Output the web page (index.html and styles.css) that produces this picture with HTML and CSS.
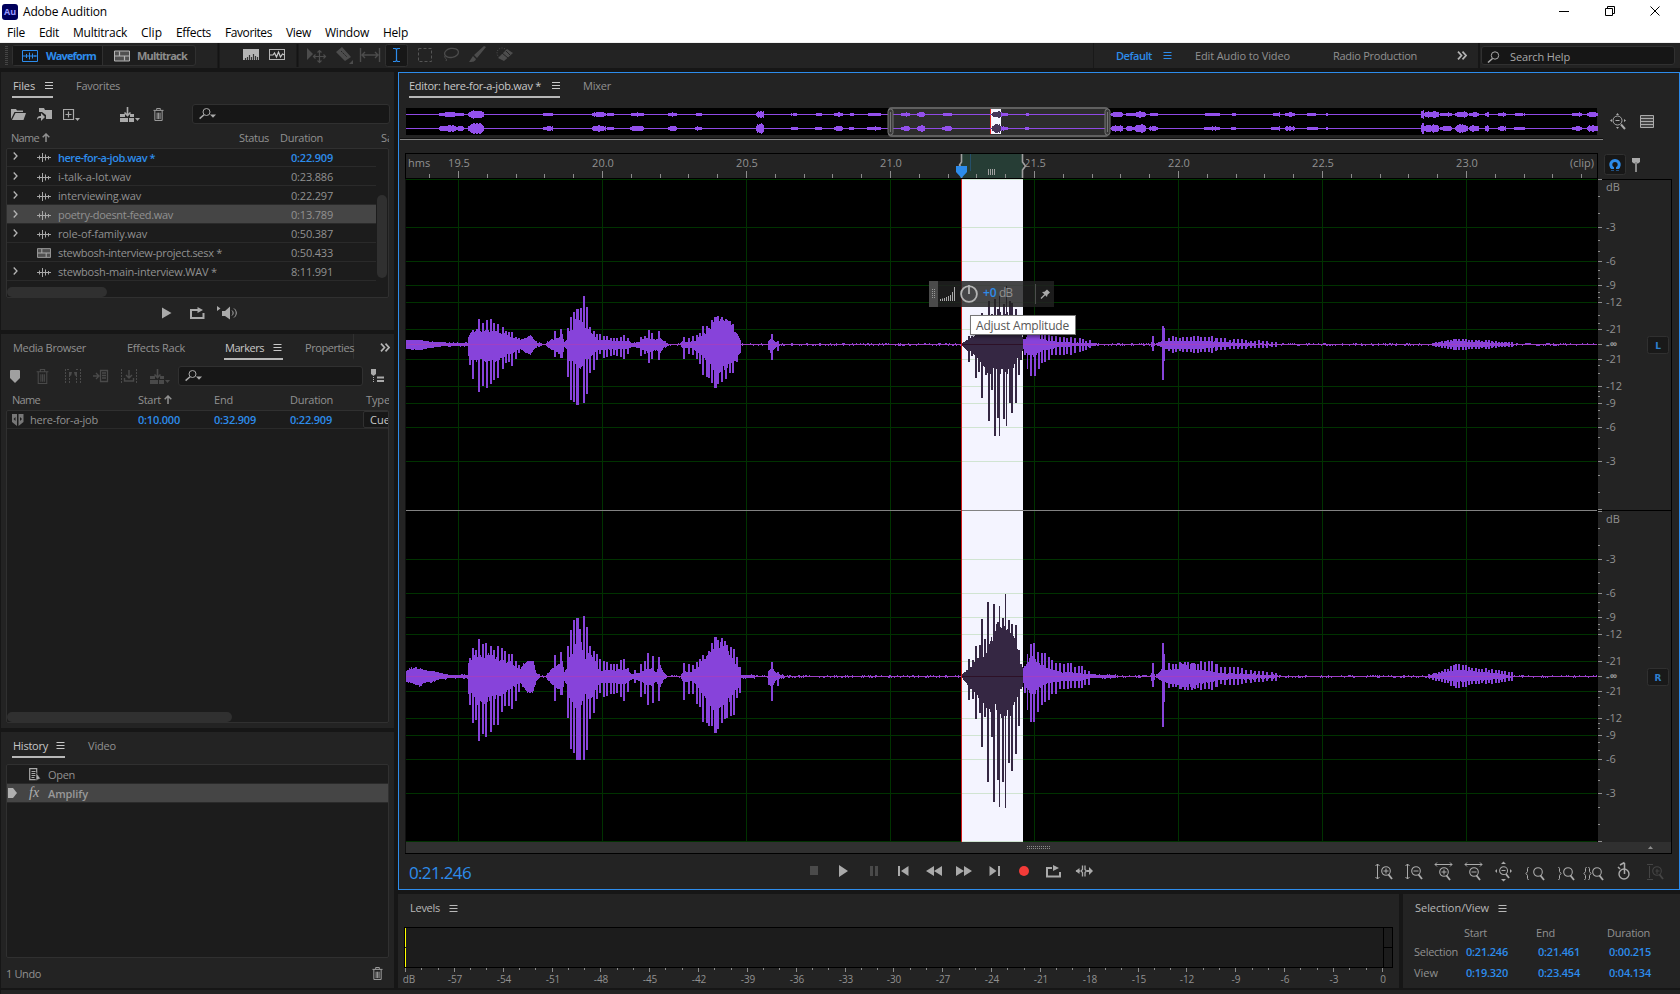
FILE: index.html
```html
<!DOCTYPE html>
<html lang="en">
<head>
<meta charset="utf-8">
<title>Adobe Audition</title>
<link rel="stylesheet" href="styles.css">
</head>
<body>
<svg class="defs" width="0" height="0">
  <symbol id="menu" viewBox="0 0 8 9"><path d="M0 1.5h8M0 4.5h8M0 7.5h8" stroke="currentColor" fill="none"/></symbol>
  <symbol id="trash" viewBox="0 0 12 14"><path d="M.5 2.5h11M4 2V.5h4V2M2 3v10.5h8V3M4.5 5v7M6.1 5v7M7.7 5v7" stroke="currentColor" fill="none"/></symbol>
  <symbol id="find" viewBox="0 0 18 12"><circle cx="7.5" cy="4" r="3.5" fill="none" stroke="currentColor"/><path d="M5 6.8L.6 10.6" stroke="currentColor" stroke-width="1.5"/><path d="M11 6.5h6l-3 3.2z" fill="currentColor"/></symbol>
  <symbol id="wave" viewBox="0 0 14 11"><path d="M0 5.5h14M2.5 3.5v4M5.5 1v9M8.500 2.500v6M11.5 4v3.500" stroke="currentColor" fill="none"/></symbol>
  <symbol id="multi" viewBox="0 0 16 11"><path d="M.5 .5h15v10H.5z" fill="#505050" stroke="currentColor"/><path d="M1 5.500h14M5.500 1v4M10.500 6v4" stroke="currentColor" stroke-width="1.200"/></symbol>
  <symbol id="insert" viewBox="0 0 20 15"><path d="M0 7h5v3H0zM10 7h4v3h-4zM0 11h8v4H0zM9 11h5v4H9z" fill="currentColor"/><path d="M7.500 0v8M4.500 5.500l3 3 3-3" stroke="currentColor" stroke-width="1.600" fill="none"/><path d="M15 11h5l-2.500 3z" fill="currentColor"/></symbol>
  <symbol id="play" viewBox="0 0 10 12"><path d="M0 .5v11L9.500 6z" fill="currentColor"/></symbol>
  <symbol id="loop" viewBox="0 0 15 12"><path d="M6 3H1v8h12.500V6M6 3h3" stroke="currentColor" stroke-width="2" fill="none"/><path d="M7.500 0v6L13 3z" fill="currentColor"/></symbol>
  <symbol id="lens" viewBox="0 0 12 14"><circle cx="5" cy="5" r="4.300" fill="none" stroke="currentColor" stroke-width="1.100"/><path d="M7.500 8.500l3.500 4.500" stroke="currentColor" stroke-width="1.900"/></symbol>
  <symbol id="arrowup" viewBox="0 0 8 9"><path d="M4 9V1M.7 4.200L4 1l3.300 3.200" stroke="currentColor" stroke-width="1.500" fill="none"/></symbol>
  <symbol id="more" viewBox="0 0 10 9"><path d="M1 .7l3.500 3.800L1 8.300M5.500 .7L9 4.500 5.500 8.300" stroke="currentColor" stroke-width="1.700" fill="none"/></symbol>
</svg>
<div class="app">
  <header class="titlebar">
    <svg class="logo" width="16" height="16"><rect width="16" height="16" rx="3" fill="#00005b"/><text x="8" y="11.300" text-anchor="middle" class="logo-text">Au</text></svg>
    <span data-w="84">Adobe Audition</span>
    <svg class="winctl" width="110" height="20" viewBox="1555 0 110 20"><path d="M1559 9.500h10M1605.500 6.500h7v7h-7zM1607.500 6.500v-2h7v7h-2M1650.500 4.500l9 9M1659.500 4.500l-9 9" fill="none" stroke="#000"/></svg>
  </header>
  <nav class="menubar">
    <span data-w="18">File</span><span data-w="20">Edit</span><span data-w="54">Multitrack</span><span data-w="21">Clip</span><span data-w="35">Effects</span><span data-w="47">Favorites</span><span data-w="25">View</span><span data-w="44">Window</span><span data-w="25">Help</span>
  </nav>
  <div class="toolbar">
    <svg class="grip" width="3" height="19"><path d="M1.500 0v19" stroke="#444" stroke-width="3" stroke-dasharray="1 1"/></svg>
    <div class="modes">
      <div class="mode active"><svg width="16" height="12" viewBox="0 0 16 12"><path d="M.5 .5h15v11H.5zM1 6h14M4.500 4v4M7.500 2.500v7M10.500 3.500v5M13 5v2" fill="none" stroke="currentColor"/></svg><b data-w="50">Waveform</b></div>
      <div class="mode"><svg class="lite" width="16" height="12"><use href="#multi"/></svg><b data-w="50">Multitrack</b></div>
    </div>
    <svg class="tools" width="300" height="25" viewBox="215 43 300 25">
      <path d="M218.500 43v25M297.500 44v23" stroke="#141414" stroke-width="2"/>
      <rect x="243" y="49" width="16" height="11" fill="#b4b4b4"/><path d="M245.500 60v-2M247.500 60v-3M249.500 60v-5M251.500 60v-3M253.500 60v-6M255.500 60v-4M257.500 60v-3" fill="none" stroke="#333" stroke-width="1.200"/>
      <rect x="269.500" y="49.500" width="15" height="10" fill="none" stroke="#b4b4b4"/><path d="M270 55h3l1.500-2 2 4 2-5 2 5 2-3 2 1" fill="none" stroke="#c8c8c8" stroke-width="1.200"/>
      <g fill="#4c4c4c" stroke="none"><path d="M307 48v12l6-6z"/><path d="M336 52l6-5 9 10-6 4zM353 60v4h-4zM469 62l4-6 3 3c-1 3-4 3-7 3zM474 55l10-9 2 1-9 11z"/><path d="M498 58l9-9 6 4-9 8z"/></g>
      <path d="M319.500 51v11M314 56.500h11M317.500 52.500l2-2 2 2M317.500 60.500l2 2 2-2M315.500 54.500l-2 2 2 2M323.500 54.500l2 2-2 2" fill="none" stroke="#4c4c4c" stroke-width="1.200"/>
      <path d="M360.500 48v14M379.500 48v14M362 55h16M365 52l-3 3 3 3M375 52l3 3-3 3" fill="none" stroke="#4c4c4c" stroke-width="1.400"/>
      <rect x="385.500" y="44.500" width="22" height="22" rx="2" fill="#171717" stroke="#303030"/><path d="M393 48.500h2.500l1 1 1-1h2.500M396.500 49v12M393 61.500h2.500l1-1 1 1h2.500" fill="none" stroke="#2d8ceb" stroke-width="1.200"/>
      <rect x="418.500" y="48.500" width="13" height="13" fill="none" stroke="#555" stroke-dasharray="3 2"/>
      <ellipse cx="451.500" cy="53" rx="7" ry="4.500" fill="none" stroke="#4c4c4c" stroke-width="1.300" transform="rotate(-10 451 53)"/><path d="M445 56c-2 2 3 2 1 5" stroke="#4c4c4c" fill="none"/>
      <circle cx="502" cy="53" r="5" fill="none" stroke="#555" stroke-dasharray="1 1.500"/><path d="M502 53l6 5M506 51l4 4" stroke="#232323"/>
      <path d="M341 51l6 6" stroke="#232323" stroke-dasharray="2 1"/>
    </svg>
    <div class="spaces">
      <span class="blue strong" data-w="36">Default</span><svg class="blue" width="9" height="9"><use href="#menu"/></svg><span data-w="95">Edit Audio to Video</span><span data-w="84">Radio Production</span><svg class="lite" width="10" height="9"><use href="#more"/></svg>
    </div>
    <div class="help"><svg width="13" height="12" viewBox="0 0 13 12"><circle cx="8" cy="4.500" r="3.700" fill="none" stroke="#aaa"/><path d="M5.500 7.500L1 11.500" stroke="#aaa" stroke-width="1.500"/></svg><span data-w="60">Search Help</span></div>
  </div>

  <main class="workspace">
    <aside class="left">
      <section class="panel files">
        <div class="tabs"><div class="tab on"><span data-w="22">Files</span><svg width="8" height="9"><use href="#menu"/></svg></div><div class="tab t2"><span data-w="44">Favorites</span></div></div>
        <div class="tools-row files-tools">
          <svg width="16" height="12" viewBox="0 0 16 12"><path d="M0 11V1h5l1 1.500h6V4H3.500z" fill="#aaa"/><path d="M4.500 5H15l-2.500 7H1z" fill="#aaa"/></svg>
          <svg width="16" height="14" viewBox="0 0 16 14"><path d="M2 1h5l1 2h7v9H9V8L5 5H2z" fill="#aaa"/><path d="M0 13c0-3 1-4 4-4V6l4 4-4 4v-3c-2 0-3 0-4 2z" fill="#aaa"/></svg>
          <svg width="18" height="13" viewBox="0 0 18 13"><path d="M.5 1.500h10v10H.5zM5.500 3.500v6M2.500 6.500h6" fill="none" stroke="#aaa" stroke-width="1.200"/><path d="M12 10h5l-2.500 3z" fill="#aaa"/></svg>
          <svg width="20" height="15"><use href="#insert"/></svg>
          <svg width="11" height="13"><use href="#trash"/></svg>
          <div class="search"><svg width="18" height="12"><use href="#find"/></svg></div>
        </div>
        <div class="thead files-cols"><span class="arrowed"><i data-w="28">Name</i><svg width="8" height="9"><use href="#arrowup"/></svg></span><span data-w="30">Status</span><span data-w="43">Duration</span><span>Sa</span></div>
        <div class="tbody files-body" id="files"></div>
        <div class="preview">
          <svg width="10" height="12"><use href="#play"/></svg><svg width="15" height="12"><use href="#loop"/></svg>
          <svg width="21" height="14" viewBox="0 0 21 14"><path d="M0 0v5l3.500-2.500z" fill="#aaa"/><path d="M5 5h3l5-4.500v13L8 10H5z" fill="#aaa"/><path d="M15 4.500c1.500 1.500 1.500 3.500 0 5M17 2.500c3 2.500 3 6.500 0 9" fill="none" stroke="#aaa"/></svg>
        </div>
      </section>

      <section class="panel markers">
        <div class="tabs mk-tabs"><div class="tab"><span data-w="73">Media Browser</span></div><div class="tab"><span data-w="58">Effects Rack</span></div><div class="tab on"><span data-w="39">Markers</span><svg width="9" height="9"><use href="#menu"/></svg></div><div class="tab"><span data-w="49">Properties</span></div><svg class="lite" width="10" height="9"><use href="#more"/></svg></div>
        <div class="tools-row mk-tools">
          <svg width="10" height="13"><path d="M0 1q0-1 1-1h8q1 0 1 1v7l-5 5-5-5z" fill="#a0a0a0"/></svg>
          <svg class="dim" width="13" height="15"><use href="#trash"/></svg>
          <svg class="dim" width="17" height="14" viewBox="0 0 17 14"><path d="M.5 0v14M15.500 0v14M4.500 6v8M11.500 6v8M2 .5h3M11 .5h3" stroke="currentColor" fill="none" stroke-dasharray="2 1"/><path d="M4 3h3l-1 4-2-1zM9 3h3v3l-2 1z" fill="currentColor"/></svg>
          <svg class="dim" width="16" height="14" viewBox="0 0 16 14"><path d="M0 7h5M3 4l3 3-3 3M7.500 1.500h7v11h-7zM9 4h4M9 6.500h4M9 9h4" stroke="currentColor" stroke-width="1.300" fill="none"/></svg>
          <svg class="dim" width="16" height="14" viewBox="0 0 16 14"><path d="M.5 0v14M15.500 0v14" stroke="currentColor" stroke-dasharray="2 1"/><path d="M8 1v8M5 6l3 3 3-3M3.500 9v3h9V9" stroke="currentColor" fill="none" stroke-width="1.400"/></svg>
          <svg class="dim" width="20" height="15"><use href="#insert"/></svg>
          <div class="search"><svg width="18" height="12"><use href="#find"/></svg></div>
          <svg width="14" height="14" viewBox="0 0 14 14"><path d="M0 0h5v5l-2.500 2L0 5z" fill="#aaa"/><path d="M2.500 8v6" stroke="#aaa" stroke-dasharray="1 1"/><path d="M6 8.500h7M6 12h7" stroke="#aaa" stroke-width="2"/></svg>
        </div>
        <div class="thead mk-cols"><span data-w="28">Name</span><span class="arrowed"><i data-w="23">Start</i><svg width="8" height="9"><use href="#arrowup"/></svg></span><span data-w="19">End</span><span data-w="43">Duration</span><span data-w="24">Type</span></div>
        <div class="tbody mk-body">
          <div class="mk-row"><svg width="12" height="12" viewBox="0 0 12 12"><path d="M0 0h5v12L0 8zM6.500 0h5v8l-5 4z" fill="#777"/><path d="M3.500 3v4l-2-2zM8 3v4l2-2z" fill="#1c1c1c"/></svg><span data-w="68">here-for-a-job</span><span class="blue strong" data-w="42">0:10.000</span><span class="blue strong" data-w="42">0:32.909</span><span class="blue strong" data-w="42">0:22.909</span><span class="cue">Cue</span></div>
          <div class="hbar mk-hbar"></div>
        </div>
      </section>

      <section class="panel history">
        <div class="tabs"><div class="tab on hist-tab"><span data-w="35">History</span><svg width="9" height="9"><use href="#menu"/></svg></div><div class="tab t3"><span data-w="28">Video</span></div></div>
        <div class="tbody hist-body">
          <div class="hist-row"><i></i><svg width="12" height="13" viewBox="0 0 12 13"><path d="M.7 .7h7v11h-7zM2.500 3.500h4M2.500 5.500h4M2.500 7.500h4M2.500 9.500h3" stroke="#aaa" stroke-width="1.200" fill="none"/><path d="M7 4.500v8l4.500-2z" fill="#aaa" stroke="#1c1c1c" stroke-width=".6"/></svg><span data-w="27">Open</span></div>
          <div class="hist-row sel"><svg width="9" height="10"><path d="M0 0h5l4 5-4 5H0z" fill="#b0b0b0"/></svg><em>fx</em><span data-w="40">Amplify</span></div>
        </div>
        <div class="hist-foot"><span data-w="35">1 Undo</span><svg width="11" height="13"><use href="#trash"/></svg></div>
      </section>
    </aside>

    <div class="right">
      <section class="panel editor">
        <div class="tabs"><div class="tab on"><span data-w="132">Editor: here-for-a-job.wav *</span><svg width="8" height="9"><use href="#menu"/></svg></div><div class="tab t4"><span data-w="28">Mixer</span></div></div>
        <svg id="overview" width="1280" height="55" viewBox="399 98 1280 55"></svg>
        <svg id="ruler" width="1280" height="26" viewBox="399 153 1280 26"></svg>
        <div class="stage">
          <svg id="graph" width="1280" height="675" viewBox="399 179 1280 675"></svg>
          <div class="hud">
            <svg class="hud-grip" width="9" height="26" viewBox="0 0 9 26"><path d="M3.500 8v10M5.500 8v10" stroke="#999" stroke-dasharray="1 1"/></svg>
            <svg width="16" height="14" viewBox="0 0 16 14"><path d="M.5 14v-2M2.500 14v-2.500M4.500 14v-3M6.500 14v-4M8.500 14V9M10.500 14V8M12.500 14V5M14.500 14V0" stroke="#aaa"/></svg>
            <svg width="18" height="18"><circle cx="9" cy="9" r="7.900" fill="none" stroke="#b4b4b4" stroke-width="1.800"/><path d="M9 0v9" stroke="#b4b4b4" stroke-width="1.800"/></svg>
            <span class="blue strong">+0</span><span data-w="13">dB</span>
            <svg class="pin" width="16" height="20" viewBox="0 0 16 20"><path d="M.5 0v20" stroke="#4c4c4c"/><path d="M6 14.500l4-4" stroke="#aaa" stroke-width="1.300"/><path d="M7 8l2.500-.3L12 5.500 15 8.500l-2.500 2.300L12 13z" fill="#aaa"/></svg>
          </div>
          <div class="tip"><span data-w="93">Adjust Amplitude</span></div>
        </div>
        <div class="transport">
          <span class="clock" data-w="62">0:21.246</span>
          <svg width="290" height="20" viewBox="806 862 290 20" fill="#aaa">
            <path d="M810 866h8v9h-8zM870 866h3v10h-3zM875 866h3v10h-3z" fill="#4a4a4a"/>
            <path d="M839 865v12l9-6zM898 866h2v10h-2zM908.500 866v10l-7.500-5zM934 866v10l-8-5zM942 866v10l-8-5zM956 866v10l8-5zM964 866v10l8-5zM989.500 866v10l7-5zM998 866h2v10h-2z"/>
            <circle cx="1024" cy="871" r="5" fill="#f33b38"/>
            <path d="M1052 868h-5v8.500h13V872" stroke="#aaa" stroke-width="2" fill="none"/><path d="M1053 865v6l6-3z"/>
            <path d="M1082.500 865.500v4l-1.500 1.500 1.500 1.500v4M1085 865.500v4l1.500 1.500-1.500 1.500v4M1080 871h-4" stroke="#aaa" fill="none" stroke-width="1.300"/><path d="M1075.500 871l4-3v6zM1087 870h2v-3l4 4-4 4v-3h-2z"/>
          </svg>
          <svg class="zooms" width="292" height="22" viewBox="1374 860 292 22" color="#aaa" fill="none" stroke="#aaa">
            <path d="M1377.500 863v15M1375.500 865l2-2 2 2M1375.500 876l2 2 2-2M1407.500 863v15M1405.500 865l2-2 2 2M1405.500 876l2 2 2-2M1435 863.500h17M1437 861.500l-2 2 2 2M1450 861.500l2 2-2 2M1465 863.500h17M1467 861.500l-2 2 2 2M1480 861.500l2 2-2 2"/>
            <g stroke="none"><use href="#lens" x="1381" y="865" width="12" height="14"/><use href="#lens" x="1411" y="865" width="12" height="14"/><use href="#lens" x="1439" y="866" width="12" height="14"/><use href="#lens" x="1469" y="866" width="12" height="14"/><use href="#lens" x="1499" y="865" width="11" height="13"/><use href="#lens" x="1533" y="866" width="12" height="14"/><use href="#lens" x="1563" y="866" width="12" height="14"/><use href="#lens" x="1592" y="866" width="12" height="14"/><use href="#lens" x="1652" y="865" width="12" height="14" color="#444"/></g>
            <path d="M1383.500 870h5M1386 867.500v5M1413.500 870h5M1441.500 871h5M1444 868.500v5M1471.500 871h5M1501.500 869.500h4"/>
            <path d="M1501 863l2.500-2.500 2.500 2.500zM1501 878l2.500 2.500 2.500-2.500zM1497 868l-2 2 2 2zM1510 868l2 2-2 2z" fill="#aaa" stroke="none"/>
            <path d="M1528.500 866l-1 1.500v3l-1.500 2 1.500 2v3l1 1.500M1558.500 866l1 1.500v3l1.500 2-1.500 2v3l-1 1.500M1586.500 866l-1 1.500v3l-1.500 2 1.500 2v3l-1 1.500M1588.500 866l1 1.500v3l1.500 2-1.500 2v3l-1 1.500"/>
            <circle cx="1624" cy="873" r="5" stroke-width="1.400"/><path d="M1624.500 873v-11M1620 864l4.500-2.500M1618 866l2 2" stroke-width="1.500"/>
            <path d="M1649.500 865v12M1647 863.500h6M1647 878.500h6M1655.500 870h4M1657 868v5" stroke="#444"/>
          </svg>
        </div>
      </section>
      <div class="bottom">
        <section class="panel levels">
          <div class="ptitle"><span data-w="30">Levels</span><svg width="9" height="9"><use href="#menu"/></svg></div>
          <svg id="meter" width="1001" height="66" viewBox="398 922 1001 66"></svg>
        </section>
        <section class="panel selview">
          <div class="ptitle"><span data-w="74">Selection/View</span><svg width="9" height="9"><use href="#menu"/></svg></div>
          <div class="sv-row sv-head"><i></i><span data-w="23">Start</span><span data-w="19">End</span><span data-w="43">Duration</span></div>
          <div class="sv-row"><span data-w="44">Selection</span><b data-w="42">0:21.246</b><b data-w="42">0:21.461</b><b data-w="42">0:00.215</b></div>
          <div class="sv-row last"><span data-w="24">View</span><b data-w="42">0:19.320</b><b data-w="42">0:23.454</b><b data-w="42">0:04.134</b></div>
        </section>
      </div>
    </div>
  </main>
  <footer class="status"></footer>
</div>
<script src="app.js"></script>
</body>
</html>
```
FILE: styles.css
```css
* { box-sizing: border-box; }
body { margin: 0; background: #161616; overflow: hidden; font: 500 11px/16px "Open Sans", "Noto Sans", sans-serif; color: #919191; white-space: nowrap; }
svg { display: block; flex: none; }
i { font-style: normal; }
.defs { position: absolute; }
.app { width: 1680px; height: 994px; display: flex; flex-direction: column; background: #161616; }
.blue { color: #2d8ceb; }
.strong { font-weight: 600; }
.lite { color: #b4b4b4; }
.dim { color: #4a4a4a; }

.titlebar { height: 21px; background: #fff; color: #000; display: flex; align-items: center; padding: 2px 15px 0 2px; font-size: 12px; font-weight: 400; gap: 5px; }
.winctl { margin-left: auto; }
.menubar { height: 22px; background: #fff; border-bottom: 1px solid #f0f0f0; color: #000; display: grid; grid-template-columns: 32px 34px 68px 35px 49px 61px 39px 58px 40px; padding: 4px 0 0 7px; font-size: 12px; font-weight: 400; }

.toolbar { height: 25px; background: #232323; display: flex; align-items: center; }
.grip { margin: 0 4px 0 5px; }
.modes { display: flex; width: 184px; height: 21px; border: 1px solid #303030; border-radius: 3px; background: #1d1d1d; }
.mode { display: flex; align-items: center; gap: 7px; padding-left: 11px; width: 92px; color: #8c8c8c; }
.mode b { font-weight: 700; }
.mode.active { width: 90px; padding-left: 9px; gap: 8px; color: #2d8ceb; background: #171717; border-right: 1px solid #303030; }
.tools { margin-left: 19px; }
.spaces { margin-left: 578px; width: 387px; height: 25px; border-left: 1px solid #191919; border-right: 2px solid #161616; display: grid; grid-template-columns: 47px 32px 138px 124px 12px; padding-left: 22px; align-items: center; }
.help { margin-left: 1px; width: 194px; height: 19px; border: 1px solid #303030; border-radius: 3px; background: #161616; display: flex; align-items: center; gap: 10px; padding: 2px 0 0 5px; color: #a8a8a8; }

.workspace { margin: 4px 0 0 1px; display: grid; grid-template-columns: 393px 1282px; gap: 4px; height: 916px; }
.left, .right { display: flex; flex-direction: column; gap: 4px; }
.panel { background: #232323; }
.files { height: 258px; }
.markers { height: 394px; }
.history { height: 256px; }
.tabs { height: 26px; display: flex; padding-left: 11px; }
.tab { height: 26px; display: flex; align-items: center; gap: 10px; padding-top: 3px; border-bottom: 2px solid transparent; }
.tab.on { color: #c8c8c8; border-color: #b8b8b8; padding-left: 1px; }
.tab span { flex: none; }
.t2 { margin-left: 23px; }
.t3 { margin-left: 23px; }
.t4 { margin-left: 23px; }
.hist-tab { gap: 8px; }
.tools-row { display: grid; align-items: center; height: 30px; padding: 2px 0 0 10px; color: #aaa; }
.files-tools { grid-template-columns: 26px 26px 57px 33px 39px 198px; }
.search { height: 20px; border: 1px solid #303030; border-radius: 3px; background: #171717; padding: 3px 0 0 6px; color: #aaa; }
.thead { height: 20px; margin: 0 5px; align-items: center; display: grid; overflow: hidden; }
.arrowed { display: flex; align-items: center; gap: 3px; }
.arrowed svg { margin-top: -2px; }
.files-cols { grid-template-columns: 228px 41px 101px 8px; padding-left: 5px; }
.tbody { margin: 0 5px; width: 383px; border: 1px solid #303030; border-radius: 2px; background: #1c1c1c; overflow: hidden; position: relative; }
.files-body { height: 150px; }
.file { width: 369px; height: 19px; border-bottom: 1px solid #2a2a2a; display: grid; grid-template-columns: 23px 21px 233px 60px; padding: 2px 0 0 7px; align-items: center; }
.file:first-child { height: 18px; padding-top: 0; }
.file > :first-child { margin: -3px 0 0 -1px; }
.file.sel, .hist-row.sel { background: #454545; }
.file svg { color: #a8a8a8; }
.hbar { position: absolute; left: 0; bottom: 0; height: 10px; border-radius: 5px; background: #303030; width: 100px; }
.vbar { position: absolute; right: 1px; top: 46px; width: 10px; height: 83px; border-radius: 5px; background: #303030; }
.preview { height: 30px; display: grid; grid-template-columns: 28px 27px 21px; padding-left: 161px; align-items: center; color: #aaa; }

.mk-tabs { display: grid; grid-template-columns: 114px 97px 81px 49px 26px 11px; padding-left: 12px; align-items: center; }
.mk-tabs .tab.on { width: 59px; gap: 9px; }
.mk-tabs .tab:nth-child(4) { border-right: 1px solid #303030; }
.mk-tabs > svg { grid-column: 6; }
.mk-tools { grid-template-columns: 26px 29px 28px 28px 29px 28px 193px 14px; padding-left: 9px; }
.mk-tools .search { width: 185px; }
.mk-cols { grid-template-columns: 126px 76px 76px 76px 24px; padding-left: 6px; }
.mk-body { height: 313px; }
.mk-row { height: 18px; border-bottom: 1px solid #2a2a2a; display: grid; grid-template-columns: 18px 108px 76px 76px 73px 30px; padding: 0 0 1px 5px; align-items: center; }
.cue { height: 17px; background: #171717; border: 1px solid #303030; border-radius: 2px; padding-left: 6px; color: #c8c8c8; line-height: 15px; }
.mk-hbar { width: 225px; }

.hist-body { margin-top: 6px; height: 194px; }
.hist-row { height: 19px; border-bottom: 1px solid #2a2a2a; display: grid; grid-template-columns: 21px 19px 100px; padding: 2px 0 0 1px; align-items: center; }
.hist-row > :first-child, .hist-row > :nth-child(2) { margin-top: -2px; }
.hist-row em { font: italic 14px/16px "Liberation Serif", serif; color: #b0b0b0; }
.hist-row.sel span { font-weight: 600; color: #999; }
.hist-foot { height: 30px; display: flex; align-items: center; justify-content: space-between; padding: 2px 11px 0 5px; }
.hist-foot svg { color: #aaa; margin-top: -2px; }

.editor { height: 818px; border: 1px solid #2d8ceb; display: flex; flex-direction: column; }
.editor .tabs { height: 25px; padding-left: 10px; }
.editor .tab { height: 25px; padding: 2px 0 0; gap: 11px; }
.stage { position: relative; height: 675px; }
.hud { position: absolute; left: 530px; top: 102px; width: 125px; height: 26px; background: rgba(34, 34, 34, .83); display: grid; grid-template-columns: 11px 20px 23px 16px 36px 16px; align-items: center; font-size: 12px; }
.hud span { margin-top: -2px; }
.hud-grip { background: #4a4a4a; }
.tip { position: absolute; left: 571px; top: 136px; width: 106px; height: 20px; border: 1px solid #767676; background: #fff; color: #575757; font-size: 12px; font-weight: 400; line-height: 19px; padding-left: 5px; box-shadow: 2px 2px 3px rgba(0, 0, 0, .4); }
.transport { height: 35px; display: flex; align-items: center; padding-left: 10px; }
.clock { font-size: 17px; font-weight: 400; color: #2d8ceb; width: 397px; padding-top: 3px; }
.zooms { margin-left: 278px; }
svg text { font: 500 11px "Open Sans", sans-serif; fill: #919191; }
svg text.key { font: 700 9px "DejaVu Sans", sans-serif; fill: #2d7fd0; }
svg text.logo-text { font: 700 9px "Open Sans", sans-serif; fill: #9999ff; }
svg text.small { font-size: 10px; }
svg text.inf { font-weight: 700; }

.bottom { display: flex; gap: 4px; height: 94px; }
.levels { width: 1001px; }
.selview { width: 277px; padding-left: 11px; }
.ptitle { height: 28px; display: flex; align-items: center; gap: 9px; color: #b8b8b8; }
.levels .ptitle { padding-left: 12px; }
.selview .ptitle { padding-left: 1px; }
.sv-row { height: 20px; display: grid; grid-template-columns: 52px 72px 71px 60px; align-items: center; padding-bottom: 2px; }
.sv-row b { font-weight: 600; color: #2d8ceb; }
.sv-head { height: 21px; padding: 0; grid-template-columns: 50px 72px 71px 60px; }
.last { height: 21px; padding-bottom: 1px; }
.status { margin: 2px 0 0 1px; height: 4px; background: #232323; }
```
FILE: app.js
```js
function fitLabels() {
  document.querySelectorAll('[data-w]').forEach(function (el) {
    var r = document.createRange();
    r.selectNodeContents(el);
    var w = r.getBoundingClientRect().width;
    el.style.letterSpacing = ((+el.dataset.w - w) / el.textContent.length).toFixed(3) + 'px';
  });
}

// File list
var files = [['here-for-a-job.wav *', '0:22.909', 97], ['i-talk-a-lot.wav', '0:23.886', 73], ['interviewing.wav', '0:22.297', 83],
  ['poetry-doesnt-feed.wav', '0:13.789', 115], ['role-of-family.wav', '0:50.387', 89], ['stewbosh-interview-project.sesx *', '0:50.433', 164],
  ['stewbosh-main-interview.WAV *', '8:11.991', 159]];
document.getElementById('files').innerHTML = files.map(function (f, i) {
  var c = i === 0 ? ' blue strong' : '';
  var arrow = i === 5 ? '<i></i>' : '<svg width="5" height="8"><path d="M.7 .5L4 4 .7 7.500" fill="none" stroke="#b4b4b4" stroke-width="1.300"/></svg>';
  var icon = i === 5 ? '<svg width="14" height="10"><use href="#multi"/></svg>' : '<svg width="14" height="11"><use href="#wave"/></svg>';
  return '<div class="file' + (i === 3 ? ' sel' : '') + c + '">' + arrow + icon + '<span data-w="' + f[2] + '">' + f[0] + '</span><span data-w="42">' + f[1] + '</span></div>';
}).join('') + '<div class="hbar"></div><div class="vbar"></div>';

function rect(x, y, w, h, f) { return '<rect x="' + x + '" y="' + y + '" width="' + w + '" height="' + h + '" fill="' + f + '"/>'; }
function text(x, y, s, a, c) { return '<text x="' + x + '" y="' + y + '"' + (a ? ' text-anchor="' + a + '"' : '') + (c ? ' class="' + c + '"' : '') + '>' + s + '</text>'; }
var seed = 7;
function rnd() { seed = (seed * 16807) % 2147483647; return seed / 2147483647; }

// Main waveform: body envelopes [x, up, down] and single peaks [x, up, down, width]
var bodyL = [[406,4,4],[413,4,5],[420,4,5],[428,2.5,3],[440,2,1.5],[450,1,1],[467,1,1],[468,7,12],[472,14,14],[476,14,16],[482,12,14],[487,13,17],[497,12,16],[502,11,12],[508,9,9],[514,6,7],[519,4,4],[523,5,6],[530,9,9],[533,5,5],[537,1,1],[545,0,0],[550,4,4],[554,5,6],[562,9,12],[564,2,2],[566,4,4],[568,14,15],[573,15,17],[576,28,20],[580,25,22],[586,15,14],[590,12,12],[597,4,5],[602,4,5],[620,3,4],[626,3,4],[632,1,2],[640,2,3],[642,5,5],[648,6,8],[655,4,5],[660,6,8],[663,3,3],[668,0,0],[680,0,0],[682,3,3],[690,2,3],[696,4,6],[700,9,11],[706,11,15],[711,17,20],[716,24,28],[725,23,22],[731,19,20],[735,12,15],[740,5,8],[741,0,0],[767,0,0],[768,3,5],[771,6,8],[775,2,3],[780,0,0],[961,0,0],[966,4,5],[970,6,7],[975,8,10],[980,12,16],[985,16,23],[990,26,28],[995,30,25],[1010,30,28],[1015,25,18],[1019,14,12],[1023,5,4],[1024,4,5],[1030,12,12],[1035,9,10],[1042,5,5],[1050,3,4],[1060,2,2],[1080,1,1],[1090,1,1],[1100,0,0],[1150,0,0],[1152,4,4],[1155,0,0],[1161,3,2],[1165,3,4],[1180,3,4],[1200,3,4],[1220,2,2],[1240,1,1],[1270,0,0],[1425,0,0],[1440,1,1],[1455,3,2],[1475,2,2],[1500,1,1],[1515,0,0],[1597,0,0]];
var peaksL = [[469,9,20],[472,14,34],[478,25,47],[482,21,41],[486,24,43],[490,25,39],[493,21,35],[497,20,33],[502,17,24],[505,13,18],[508,12,17],[511,12,21],[515,7,14],[518,6,8],[554,13,12],[560,15,13],[567,16,32],[570,27,55],[573,32,57],[576,35,60,3],[580,36,22],[583,48,58],[586,37,49],[589,17,28],[593,13,25],[596,10,15],[599,10,9],[603,8,13],[606,8,12],[610,6,11],[613,6,10],[616,6,11],[620,7,12],[623,9,14],[627,6,9],[640,7,11],[644,8,9],[648,14,18],[651,11,14],[658,13,15],[683,7,14],[688,6,9],[692,8,10],[696,9,14],[699,11,19],[702,18,30],[706,18,32],[708,16,33],[711,24,38],[714,27,43,3],[717,28,39],[721,27,37],[725,25,34],[729,23,28],[732,20,28],[736,10,17],[771,10,15],[777,3,6],[968,8,17],[971,8,11],[975,12,33],[978,13,27],[981,31,53],[985,20,30],[988,43,76],[991,30,45],[994,45,91],[997,35,73],[999,48,91,1],[1003,40,74],[1006,58,81,1],[1009,43,58],[1011,41,68],[1015,35,58],[1018,20,30],[1020,8,15],[1024,5,10],[1027,18,24,1],[1030,25,31],[1034,27,31],[1038,18,24],[1041,14,18],[1044,10,17],[1048,9,15],[1051,8,10],[1055,8,10],[1059,7,10],[1063,7,10],[1066,6,9],[1070,7,10],[1074,6,8],[1079,6,7],[1082,5,6],[1085,3,5],[1089,4,3],[1152,8,6],[1162,18,35],[1164,16,16,1]];
var bodyR = [[406,5,5],[411,8,6],[418,8,9],[420,7,10],[424,6,6],[432,5,5],[440,3,2],[450,1,1],[467,1,1],[468,15,16],[472,18,18],[478,22,28],[484,16,24],[490,23,22],[497,18,20],[502,16,17],[508,14,12],[514,11,9],[519,6,6],[523,12,10],[529,17,16],[533,14,14],[536,3,4],[540,0,0],[545,0,0],[551,7,7],[554,10,8],[562,16,17],[564,4,4],[566,7,8],[568,20,22],[573,22,25],[576,38,32],[580,42,38],[583,18,18],[590,23,22],[596,15,10],[599,5,6],[604,5,6],[620,6,7],[627,6,6],[632,2,2],[640,4,4],[648,7,8],[652,7,8],[656,4,5],[659,12,12],[663,4,3],[667,0,0],[680,0,0],[683,5,6],[690,4,4],[696,7,8],[702,15,16],[708,20,23],[716,32,36],[725,30,23],[731,20,22],[735,12,14],[740,6,8],[741,1,1],[767,0,0],[768,6,8],[772,8,10],[775,4,4],[780,1,1],[786,0,0],[961,0,0],[966,6,7],[970,8,12],[977,16,18],[985,24,28],[990,32,38],[995,48,30],[1000,48,38],[1010,46,38],[1013,38,27],[1017,28,20],[1020,10,14],[1023,9,6],[1024,8,8],[1030,20,17],[1035,16,15],[1042,10,8],[1050,7,6],[1060,4,4],[1080,3,4],[1090,2,1],[1100,1,1],[1130,0,0],[1150,0,0],[1152,6,8],[1155,0,0],[1161,6,4],[1165,6,6],[1180,7,8],[1200,6,7],[1220,3,3],[1240,2,2],[1270,1,1],[1280,0,0],[1425,0,0],[1440,3,2],[1455,6,5],[1475,5,4],[1500,2,2],[1513,0,0],[1597,0,0]];
var peaksR = [[469,18,28],[472,28,46],[475,26,43],[478,37,64],[482,32,57],[485,33,60],[490,30,55],[493,26,48],[497,30,48],[501,28,35],[504,25,29],[508,22,29],[511,22,32],[515,15,24],[518,11,15],[554,21,24],[560,24,18],[567,30,41],[570,46,72],[573,56,76],[576,58,83,3],[579,47,83],[583,60,83],[586,49,73],[589,30,42],[593,25,36],[596,22,22],[599,17,16],[603,15,20],[606,14,19],[610,12,17],[613,12,17],[616,12,16],[620,16,20],[623,17,24],[627,8,15],[634,6,6],[640,12,20],[644,15,17],[647,23,28],[652,20,26],[658,19,24],[683,13,23],[688,12,17],[692,11,17],[696,14,27],[699,17,30],[702,21,45],[706,20,46],[708,25,49],[711,33,49],[714,39,56,3],[717,36,52],[721,38,46],[724,35,42],[726,31,41],[730,29,39],[733,27,38],[736,19,21],[739,9,16],[771,14,24],[777,4,9],[968,17,23],[972,16,22],[975,30,42],[979,31,36],[981,57,70],[984,37,40],[987,74,105],[991,35,60],[993,72,125],[997,54,103],[999,70,130,1],[1002,58,105],[1005,82,66,1],[1005,82,131,1],[1008,56,86],[1011,52,94],[1015,51,77],[1018,26,49],[1020,12,12],[1024,10,16],[1027,22,33,1],[1030,32,45],[1033,33,45],[1037,24,35],[1041,23,28],[1044,23,25],[1048,19,23],[1051,16,17],[1055,13,17],[1059,13,12],[1063,12,12],[1067,13,12],[1070,13,11],[1074,9,11],[1078,10,11],[1081,10,11],[1084,6,8],[1088,5,8],[1152,13,10],[1162,33,50],[1164,22,25,1]];
function train(p, from, to, step, u, d) {
  for (var x = from, i = 0; x < to; x += step, i++) {
    var t = (x - from) / (to - from), j = .85 + .3 * rnd();
    p.push([Math.round(x), (u[0] + (u[1] - u[0]) * t) * j, (d[0] + (d[1] - d[0]) * t) * j, 2]);
  }
}
train(peaksL, 1168, 1216, 3.600, [7, 7], [7, 7]); train(peaksL, 1216, 1275, 4.200, [6, 2], [5, 2]);
train(peaksR, 1168, 1216, 3.600, [12, 14], [10, 12]); train(peaksR, 1180, 1195, 3.600, [14, 13], [13, 13]); train(peaksR, 1216, 1275, 4.200, [11, 3], [9, 4]);
train(peaksL, 1432, 1455, 3, [1, 5], [1, 5]); train(peaksL, 1455, 1512, 3.300, [5, 2], [5, 2]);
train(peaksR, 1432, 1455, 3, [2, 11], [3, 9]); train(peaksR, 1455, 1512, 3.300, [11, 4], [10, 4]);

function wavePath(body, peaks, cy) {
  var d = '', k = 0;
  for (var x = 406; x < 1597; x++) {
    while (k < body.length - 2 && body[k + 1][0] <= x) k++;
    var a = body[k], b = body[k + 1], t = (x - a[0]) / (b[0] - a[0]);
    var u = a[1] + (b[1] - a[1]) * t, n = a[2] + (b[2] - a[2]) * t;
    if (u > 2) u *= .88 + .24 * rnd(); else u += rnd() > .8 ? 1 : 0;
    if (n > 2) n *= .88 + .24 * rnd(); else n += rnd() > .8 ? 1 : 0;
    u = Math.round(u); n = Math.round(n);
    d += 'M' + x + ' ' + (cy - u) + 'h1v' + (u + n + 1) + 'h-1z';
  }
  peaks.forEach(function (p) {
    var u = Math.round(p[1]), n = Math.round(p[2]), w = p[3] || 2;
    d += 'M' + p[0] + ' ' + (cy - u) + 'h' + w + 'v' + (u + n + 1) + 'h-' + w + 'z';
  });
  return d;
}

var lines = [48, 82, 106, 123, 150, 180, 207, 224, 248, 282];
var minor = [17, 34, 61, 72, 91, 99, 113, 118, 136, 144];
var g = rect(406, 179, 1191, 663, '#000') + rect(961, 179, 62, 663, '#f4f4ff');
var grid = '', selGrid = '', i;
[179, 511].forEach(function (y0) {
  lines.concat(y0 === 179 ? [0] : [330]).forEach(function (o) {
    grid += 'M406 ' + (y0 + o + .5) + 'H961M1023 ' + (y0 + o + .5) + 'H1597';
    selGrid += 'M962 ' + (y0 + o + .5) + 'H1023';
  });
});
for (i = 0; i < 8; i++) grid += 'M' + (458.5 + 144 * i) + ' 179V842';
g += '<path d="' + grid + '" stroke="#003200" fill="none"/><path d="' + selGrid + '" stroke="#d0e4d2" fill="none"/>';
g += '<clipPath id="cs"><rect x="962" y="179" width="61" height="663"/></clipPath><clipPath id="co"><path d="M406 179H962V842H406zM1023 179H1597V842H1023z"/></clipPath>';
[[bodyL, peaksL, 344], [bodyR, peaksR, 676]].forEach(function (c) {
  var d = wavePath(c[0], c[1], c[2]);
  g += '<path d="' + d + '" fill="#8743da" clip-path="url(#co)" shape-rendering="crispEdges"/><path d="' + d + '" fill="#352743" clip-path="url(#cs)" shape-rendering="crispEdges"/>';
  g += rect(406, c[2], 1191, 1, '#a03fc4') + rect(962, c[2], 61, 1, '#2d1026');
});
g += rect(406, 510, 1191, 1, '#828282') + rect(961, 179, 1, 663, '#d01818');
g += rect(1597, 179, 1, 663, '#000') + rect(1598, 179, 73, 1, '#000') + rect(1671, 179, 1, 675, '#000') + rect(1598, 510, 73, 1, '#000');
g += rect(405, 179, 1, 674, '#111') + rect(406, 842, 1265, 11, '#303030') + rect(405, 853, 1267, 1, '#000');
[[179, 'L'], [511, 'R']].forEach(function (c) {
  var y0 = c[0], t = 'M1598 ' + (y0 + .5) + 'h4';
  lines.concat([165, 330]).forEach(function (o) { t += 'M1598 ' + (y0 + o + .5) + 'h4'; });
  minor.forEach(function (o) { t += 'M1598 ' + (y0 + o + .5) + 'h2M1598 ' + (y0 + 330 - o + .5) + 'h2'; });
  g += '<path d="' + t + '" stroke="#8c8c8c"/>';
  g += text(1606, y0 + 12, 'dB');
  ['-3', '-6', '-9', '-12', '-21', '-21', '-12', '-9', '-6', '-3'].forEach(function (s, i) { g += text(1606, y0 + lines[i] + 4, s); });
  g += text(1606, y0 + 169, '-∞', '', 'inf');
  g += '<rect x="1647.500" y="' + (y0 + 157.500) + '" width="21" height="17" rx="2" fill="#191919" stroke="#303030"/>' + text(1658, y0 + 169.500, c[1], 'middle', 'key');
});
g += '<path d="M1027 846.500h24M1027 848.500h24" stroke="#8c8c8c" stroke-dasharray="1 1"/><path d="M1648 849h5l-2.500-3z" fill="#8c8c8c"/>';
document.getElementById('graph').innerHTML = g;

// Time ruler
var r = rect(405, 153, 1193, 26, '#000') + rect(406, 154, 1191, 24, '#232323') + rect(961, 154, 62, 24, '#263d35');
r += text(408, 167, 'hms') + text(1594, 167, '(clip)', 'end');
['19.5', '20.0', '20.5', '21.0', '21.5', '22.0', '22.5', '23.0'].forEach(function (s, i) {
  var x = 458.5 + 144 * i;
  r += '<g' + (i === 4 ? ' clip-path="url(#rc)"' : '') + '>' + text(x + .5, 167, s, 'middle') + '</g>';
  r += '<path d="M' + x + ' 171v7" stroke="#8c8c8c"/>';
});
r += '<clipPath id="rc"><rect x="1026" y="154" width="40" height="20"/></clipPath>';
for (i = -1; i < 40; i++) if (i % 5) r += '<path d="M' + (Math.round(458 + 28.8 * i) + .5) + ' 174v4" stroke="#8c8c8c"/>';
r += '<path d="M961.500 154v8l-2 3 2 3v10M1022.500 154v8l3 4-3 4v8" fill="none" stroke="#a0a0a0" stroke-width="1.600"/><path d="M970.500 154v17" stroke="#25506a"/>';
r += '<path d="M988.500 169v6M990.500 169v6M992.500 169v6M994.500 169v6" stroke="#a0a0a0"/>';
r += '<path d="M956 166h11v6l-5.500 6-5.500-6z" fill="#2d8ceb"/>';
r += '<rect x="1604.500" y="154.500" width="21" height="20" rx="2" fill="#171717" stroke="#303030"/><path d="M1612.500 170.500v-2.500a4.200 4.200 0 1 1 5 0v2.500" fill="none" stroke="#2d8ceb" stroke-width="3"/><path d="M1610 169.500h4.500M1616 169.500h4.500" stroke="#171717"/>';
r += '<path d="M1632 158h8v4l-2 1.500h-4l-2-1.500z" fill="#aaa"/><path d="M1636 162v10" stroke="#888" stroke-width="2"/>';
document.getElementById('ruler').innerHTML = r;

// Overview strip: bumps as [x, width, height]
var bumps = [[441,5,2],[450,14,3],[460,7,2],[476,16,5],[548,10,2],[599,14,2.500],[610,8,1],[637,14,2],[672,9,2],[698,7,1.500],[760,8,4.500],[794,8,1],[818,8,1],[838,9,2],[851,5,1],[874,14,1.500],[905,9,2],[921,8,3],[947,10,2],[997,10,4],[1004,8,1.500],[1027,4,1],[1117,12,3],[1130,8,2],[1140,12,3.500],[1153,9,2],[1212,16,1.500],[1233,5,1],[1275,10,1],[1279,1,3],[1290,10,2],[1312,12,1],[1327,2,1.500],[1422,3,5],[1428,8,3.500],[1434,10,3.500],[1446,12,2],[1461,13,3.500],[1474,10,2.500],[1487,4,2.500],[1502,8,2],[1519,12,1],[1577,10,2],[1592,11,3]];
function overPath(cy, k) {
  return bumps.map(function (b) {
    var h = b[2] * k, s = '';
    for (var x = -b[1] / 2; x < b[1] / 2; x++) {
      var v = Math.round(h * Math.sqrt(Math.max(0, 1 - Math.pow(2 * Math.abs(x) / (b[1] + 1), 2))) * (.7 + .4 * rnd()));
      s += 'M' + Math.round(b[0] + x) + ' ' + (cy - v) + 'h1v' + (2 * v + 1) + 'h-1z';
    }
    return s;
  }).join('');
}
var od = overPath(114, .75) + overPath(128, 1.050);
var o = rect(406, 108, 1191, 27, '#000') + '<rect x="889" y="108" width="219" height="28" rx="3" fill="#2d2d2d" stroke="#606060" stroke-width="2"/>';
o += rect(990, 109, 11, 25, '#f4f4ff') + rect(990, 109, 1, 25, '#e02020');
o += rect(406, 114, 1191, 1, '#8f49e4') + rect(406, 128, 1191, 1, '#8f49e4') + '<path d="' + od + '" fill="#9350ec" shape-rendering="crispEdges"/>';
o += '<clipPath id="oc"><rect x="991" y="109" width="10" height="25"/></clipPath>' + rect(991, 114, 10, 1, '#4c3a60') + rect(991, 128, 10, 1, '#4c3a60') + '<path d="' + od + '" fill="#453558" clip-path="url(#oc)"/>';
[890, 1107].forEach(function (x) { o += '<rect x="' + (x - 2) + '" y="109" width="5" height="26" rx="2.500" fill="#3a3a3a" stroke="#777"/><path d="M' + (x + .5) + ' 112v20" stroke="#777"/>'; });
o += rect(400, 138, 1203, 1, '#111') + rect(400, 139, 1203, 1, '#858585');
o += '<g fill="none" stroke="#aaa"><circle cx="1617.500" cy="120.500" r="4.500"/><path d="M1615.500 120.500h4"/><path d="M1621 124.500l4 4.500" stroke-width="2"/></g><path d="M1616 115l1.500-2 1.500 2zM1616 127l1.500 2 1.500-2zM1612 119l-2 1.500 2 1.500zM1624 119l2 1.500-2 1.500z" fill="#aaa"/>';
o += '<path d="M1640.500 115.500h13v12h-13zM1641 118.500h12M1641 121.500h12M1641 124.500h12" fill="#444" stroke="#aaa"/>';
document.getElementById('overview').innerHTML = o;

// Level meter
var m = rect(404, 927, 989, 41, '#000') + rect(405, 928, 978, 39, '#1c1c1c') + rect(1384, 928, 8, 19, '#1c1c1c') + rect(1384, 948, 8, 19, '#1c1c1c');
m += rect(405, 928, 1, 19, '#ffff00') + rect(405, 948, 1, 19, '#ffff00');
for (i = 0; i <= 60; i++) {
  var mx = Math.round(405 + 16.28 * i) + .5;
  m += '<path d="M' + mx + ' 968v' + (i % 3 ? 2 : 4) + '" stroke="#8c8c8c"/>';
  if (i % 3 === 0) m += text(i ? mx + .5 : 409, 983, i ? (i === 60 ? '0' : String(i - 60)) : 'dB', 'middle', 'small');
}
document.getElementById('meter').innerHTML = m;

fitLabels();
```
